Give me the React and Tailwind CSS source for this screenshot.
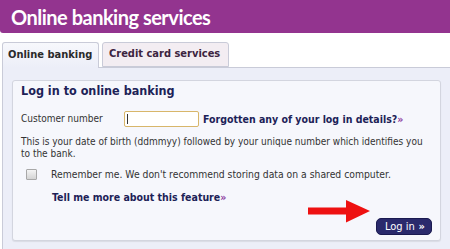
import React from 'react';

const Arrow = () => (
  <svg width="62" height="23" viewBox="0 0 62 23" className="block">
    <polygon points="0,7.5 38,7.5 38,0 62,11 38,22.5 38,14.5 0,14.5" fill="#ee1111" />
  </svg>
);

const App = () => {
  return (
    <div className="w-[450px] h-[249px] overflow-hidden bg-white font-['DejaVu_Sans_Condensed','DejaVu_Sans',sans-serif] text-[#333]">
      <div className="h-[33px] bg-[#93348f] rounded-bl-[3px] flex items-center pl-[11px]">
        <h1 className="text-white text-[20px] font-bold font-['Lato',sans-serif] tracking-[-0.5px] leading-none">
          Online banking services
        </h1>
      </div>

      <div className="flex items-end gap-[3px] pl-[2px] mt-[9px]">
        <div className="h-[26px] w-[97px] bg-gradient-to-b from-[#f7f8fc] to-[#eceef8] border border-b-0 border-[#c9cbd8] rounded-t-[3px] flex items-center pl-[5px] text-[11px] font-bold text-[#2a2a2a] -mb-px relative z-10">
          Online banking
        </div>
        <div className="h-[25px] w-[127px] bg-[#f3edf2] border border-[#c9cbd8] rounded-t-[3px] flex items-center pl-[6px] text-[11px] font-bold text-[#3c2440]">
          Credit card services
        </div>
      </div>

      <div className="bg-[#eceef8] border-l border-t border-[#c9cbd8] ml-[2px] px-[9px] pt-[12px] h-[182px]">
        <div className="bg-[#f6f7fc] border border-[#d3d5df] rounded-[3px] shadow-[0_1px_1px_rgba(0,0,0,0.08)] px-[8px] pt-[2px] h-[161px]">
          <h2 className="text-[12.5px] font-bold text-[#1c2257] leading-[16px]">Log in to online banking</h2>

          <div className="flex items-center h-[16px] mt-[12px] text-[10px] leading-[16px]">
            <span className="w-[103px]">Customer number</span>
            <div className="w-[75px] h-[16px] border border-[#d8b66a] rounded-[2px] bg-white flex items-center pl-[2px]">
              <span className="w-px h-[10px] bg-[#333]" />
            </div>
            <a className="ml-[4px] text-[10.5px] font-bold text-[#1c2257]">
              Forgotten any of your log in details?<span className="text-[#8c3a9e]">»</span>
            </a>
          </div>

          <p className="text-[10px] leading-[12px] mt-[9px]">
            This is your date of birth (ddmmyy) followed by your unique number which identifies you to the bank.
          </p>

          <div className="flex items-center h-[12px] mt-[8px] text-[10.3px] leading-[12px]">
            <span className="ml-[5px] w-[11px] h-[11px] border border-[#a8a8a8] bg-gradient-to-b from-[#f4f4f4] to-[#d4d4d4] rounded-[1px]" />
            <span className="ml-[14px]">Remember me. We don't recommend storing data on a shared computer.</span>
          </div>

          <div className="flex h-[14px] mt-[10px] pl-[31px] leading-[14px]">
            <a className="text-[10.5px] font-bold text-[#1c2257]">
              Tell me more about this feature<span className="text-[#8c3a9e]">»</span>
            </a>
          </div>

          <div className="flex items-start justify-end mt-[-4px]">
            <div className="mr-[6px]">
              <Arrow />
            </div>
            <button className="mt-[18px] w-[56px] h-[17px] bg-[#2a2a6c] rounded-[5px] border border-[#1a1a50] text-white text-[11px] leading-none flex items-center justify-between pl-[8px] pr-[6px]">
              <span>Log in</span>
              <span className="font-bold">»</span>
            </button>
          </div>
        </div>
      </div>
    </div>
  );
};

export default App;
